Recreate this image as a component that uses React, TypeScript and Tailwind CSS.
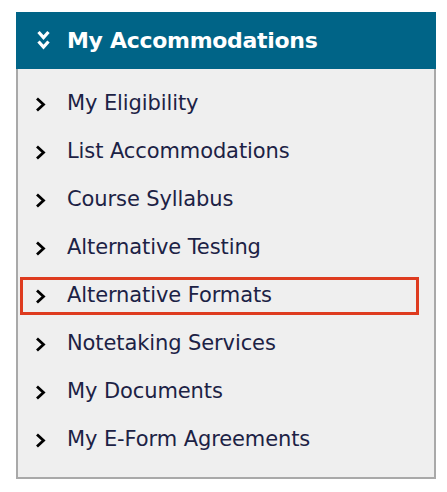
const items = [
  "My Eligibility",
  "List Accommodations",
  "Course Syllabus",
  "Alternative Testing",
  "Alternative Formats",
  "Notetaking Services",
  "My Documents",
  "My E-Form Agreements",
];

function DoubleChevron() {
  return (
    <svg width="13" height="21" viewBox="0 0 13 21" fill="none" stroke="white" strokeWidth="3.2">
      <path d="M1.5 2 L6.5 7.5 L11.5 2" />
      <path d="M1.5 11.5 L6.5 17 L11.5 11.5" />
    </svg>
  );
}

function Chevron() {
  return (
    <svg width="11" height="15" viewBox="0 0 11 15" fill="none" stroke="black" strokeWidth="2.8">
      <path d="M2 1.5 L8.5 7.5 L2 13.5" />
    </svg>
  );
}

export default function App() {
  return (
    <div className="w-[447px] h-[492px] bg-white pt-3 pl-4 font-['DejaVu_Sans',sans-serif]">
      <div className="w-[420px] h-[467px] border-2 border-[#a9a9a9] bg-[#efefef]">
        <div className="h-[57px] bg-[#006487] flex items-center pl-[21px] gap-[17px] -mt-[2px] -mx-[2px]">
          <DoubleChevron />
          <span className="text-white font-bold text-[22px] tracking-[-0.3px]">My Accommodations</span>
        </div>
        <ul className="pt-[11px]">
          {items.map((item) => (
            <li key={item} className="h-[48px] flex items-center">
              <div
                className={`h-[38px] w-[399px] ml-[2px] flex items-center pl-[12px] gap-[21px] border-[3px] text-[#1c2245] text-[21px] tracking-[-0.1px] ${
                  item === "Alternative Formats" ? "border-[#de3b1f]" : "border-transparent"
                }`}
              >
                <Chevron />
                <span>{item}</span>
              </div>
            </li>
          ))}
        </ul>
      </div>
    </div>
  );
}
